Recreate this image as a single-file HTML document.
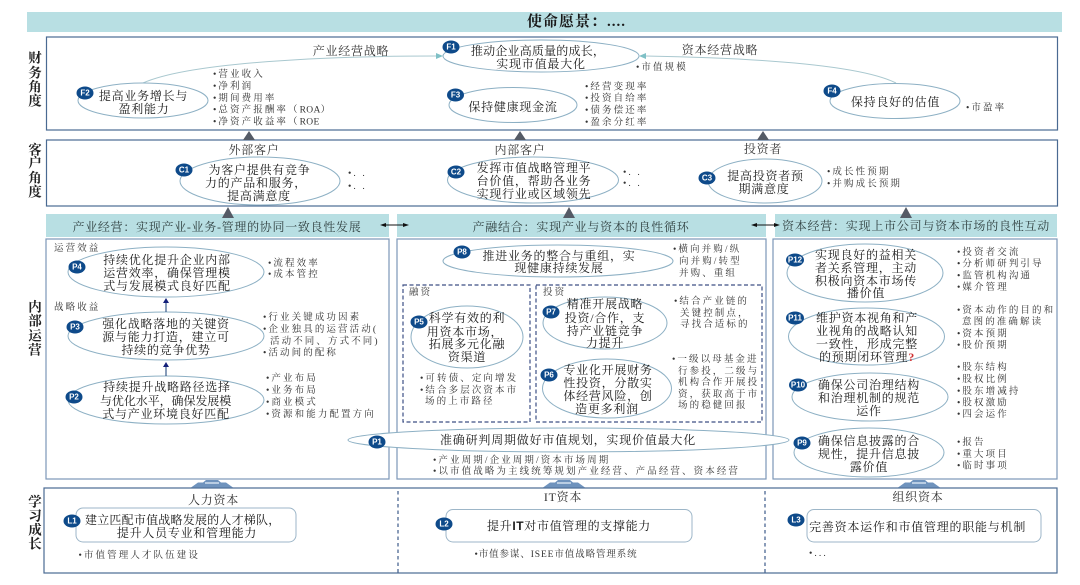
<!DOCTYPE html>
<html lang="zh"><head><meta charset="utf-8"><title>市值管理战略地图</title>
<style>
html,body{margin:0;padding:0;background:#fff;width:1080px;height:585px;overflow:hidden}
svg{display:block;filter:blur(.35px)}
text{font-family:"Liberation Serif","Noto Serif CJK SC",serif;dominant-baseline:central;fill:#1a1a1a}
.e{font-size:12px;letter-spacing:.75px;text-anchor:middle}
.h{font-size:12px;letter-spacing:.75px;text-anchor:middle;fill:#333}
.s{font-size:9.5px;letter-spacing:2.1px;fill:#333}
.v{font-size:13.5px;font-weight:700;text-anchor:middle;fill:#222}
.b{font-family:"Liberation Sans",sans-serif;font-size:8px;font-weight:700;fill:#fff;text-anchor:middle}
.box{fill:#fff;stroke:#4a6a92;stroke-width:1.2}
.pbox{fill:#fff;stroke:#7c97b8;stroke-width:1.2}
.el{fill:#fff;stroke:#8db0c4;stroke-width:1}
.rr{fill:#fff;stroke:#9db6c8;stroke-width:1}
.bd{fill:#0e4a8a}
.hd{fill:#b8dfe3}
.tri{fill:#555b66}
.up{fill:#6f93bd}
</style></head><body>
<svg width="1080" height="585" viewBox="0 0 1080 585" xmlns="http://www.w3.org/2000/svg">
<rect x="27" y="12" width="1035" height="20" class="hd"/>
<text x="527" y="22" style="font-size:15px;font-weight:700;letter-spacing:1px">使命愿景：....</text>

<rect x="46.5" y="37" width="1011" height="93" class="box"/>
<rect x="46.5" y="140" width="1011" height="66" class="box"/>
<rect x="46" y="239" width="343" height="240" class="pbox"/>
<rect x="397" y="239" width="369" height="240" class="pbox"/>
<rect x="773" y="239" width="284" height="240" class="pbox"/>
<rect x="44" y="488" width="1013" height="85" class="box"/>
<rect x="46" y="214" width="343" height="23" class="hd"/>
<rect x="397" y="214" width="369" height="23" class="hd"/>
<rect x="775" y="214" width="282" height="23" class="hd"/>

<path class="tri" d="M243 140L249 131L255 140ZM514 140L520 131L526 140ZM757 140L763 131L769 140ZM222 218L228 207L234 218ZM563 218L569 207L575 218ZM900 218L906 207L912 218Z"/>
<path class="up" d="M191 487.5L198 482.5H203L206 480H218L221 482.5H226L233 487.5ZM543 487.5L550 482.5H555L558 480H570L573 482.5H578L585 487.5ZM898 487.5L905 482.5H910L913 480H925L928 482.5H933L940 487.5Z"/>
<path d="M205 483H219M557 483H571M912 483H926" stroke="#b9cde3" stroke-width="2"/>

<g font-size="13">
<text class="v" x="35" y="58">财</text><text class="v" x="35" y="73">务</text><text class="v" x="35" y="87">角</text><text class="v" x="35" y="101">度</text>
<text class="v" x="35" y="150">客</text><text class="v" x="35" y="163">户</text><text class="v" x="35" y="178">角</text><text class="v" x="35" y="192">度</text>
<text class="v" x="35" y="307">内</text><text class="v" x="35" y="321">部</text><text class="v" x="35" y="336">运</text><text class="v" x="35" y="350">营</text>
<text class="v" x="35" y="502">学</text><text class="v" x="35" y="516">习</text><text class="v" x="35" y="530">成</text><text class="v" x="35" y="544">长</text>
</g>

<!-- curved strategy lines -->
<path d="M143 83C190 62 330 56 437 56" fill="none" stroke="#a9c8cf" stroke-width="1"/>
<path d="M896 83C860 65 760 58 645 56" fill="none" stroke="#a9c8cf" stroke-width="1"/>
<path d="M443 56L436 53V59Z" fill="#7fc0c6"/><path d="M639 56L646 53V59Z" fill="#7fc0c6"/>

<text class="h" x="351" y="51">产业经营战略</text>
<text class="h" x="720" y="50">资本经营战略</text>

<!-- ellipses -->
<ellipse class="el" cx="541" cy="56" rx="98" ry="16"/>
<ellipse class="el" cx="143" cy="100.5" rx="65" ry="17.5"/>
<ellipse class="el" cx="513" cy="105" rx="64" ry="17.5"/>
<ellipse class="el" cx="895" cy="101" rx="65" ry="17.5"/>
<ellipse class="el" cx="260" cy="181" rx="80" ry="24"/>
<ellipse class="el" cx="533" cy="180" rx="85.5" ry="23"/>
<ellipse class="el" cx="765" cy="181" rx="57" ry="22"/>
<ellipse class="el" cx="166" cy="272" rx="98" ry="25"/>
<ellipse class="el" cx="166" cy="336" rx="98" ry="24"/>
<ellipse class="el" cx="166" cy="400" rx="98" ry="24"/>
<ellipse class="el" cx="558" cy="261" rx="115" ry="16"/>
<rect x="403" y="285" width="127" height="137" fill="none" stroke="#3d4f85" stroke-width="1.2" stroke-dasharray="4 2.5"/>
<rect x="536" y="285" width="226" height="137" fill="none" stroke="#3d4f85" stroke-width="1.2" stroke-dasharray="4 2.5"/>
<ellipse class="el" cx="467" cy="337" rx="56" ry="31"/>
<ellipse class="el" cx="605" cy="323" rx="62" ry="26"/>
<ellipse class="el" cx="607" cy="388.5" rx="64.5" ry="29.5"/>
<ellipse class="el" cx="865" cy="273" rx="78" ry="29"/>
<ellipse class="el" cx="866.5" cy="336.5" rx="78" ry="28.5"/>
<ellipse class="el" cx="870" cy="397" rx="78" ry="24"/>
<ellipse class="el" cx="869" cy="452.5" rx="75" ry="24.5"/>
<ellipse class="el" cx="568.5" cy="440" rx="220.5" ry="12"/>
<rect class="rr" x="76" y="508" width="220" height="34" rx="7"/>
<rect class="rr" x="446" y="509.5" width="246" height="32.5" rx="7"/>
<rect class="rr" x="807" y="509.5" width="234" height="32.5" rx="7"/>

<path d="M398 491V574M765 491V574" stroke="#3d5a8a" stroke-width="1.2" stroke-dasharray="3.5 3" fill="none"/>

<!-- process arrows -->
<path d="M166 376V366M166 312V302" stroke="#3a5a8a" stroke-width="1.2"/>
<path d="M166 362L163 367H169ZM166 298L163 303H169Z" fill="#14207a"/>
<path d="M383 225H406M754 225H777" stroke="#111" stroke-width="1"/>
<path d="M380 225L386 223V227ZM409 225L403 223V227ZM751 225L757 223V227ZM780 225L774 223V227Z" fill="#111"/>

<!-- finance -->
<text class="e" x="538" y="51" style="letter-spacing:.2px">推动企业高质量的成长，</text>
<text class="e" x="541" y="64" style="letter-spacing:.8px">实现市值最大化</text>
<text class="e" x="143.5" y="96">提高业务增长与</text>
<text class="e" x="144" y="109">盈利能力</text>
<text class="e" x="513" y="107">保持健康现金流</text>
<text class="e" x="895.5" y="102">保持良好的估值</text>
<text class="s" x="213" y="75">•营业收入</text>
<text class="s" x="213" y="87">•净利润</text>
<text class="s" x="213" y="99">•期间费用率</text>
<text class="s" x="213" y="110.5">•总资产报酬率（<tspan style="letter-spacing:.3px">ROA</tspan>）</text>
<text class="s" x="213" y="122.5">•净资产收益率（<tspan style="letter-spacing:.3px">ROE</tspan></text>
<text class="s" x="585" y="87.5">•经营变现率</text>
<text class="s" x="585" y="99">•投资自给率</text>
<text class="s" x="585" y="111">•债务偿还率</text>
<text class="s" x="585" y="123">•盈余分红率</text>
<text class="s" x="636" y="68">•市值规模</text>
<text class="s" x="966" y="108.5">•市盈率</text>

<!-- customer -->
<text class="h" x="254" y="150">外部客户</text>
<text class="h" x="520" y="150">内部客户</text>
<text class="h" x="763" y="149">投资者</text>
<text class="e" x="259.5" y="170">为客户提供有竞争</text>
<text class="e" x="256" y="183">力的产品和服务，</text>
<text class="e" x="259" y="196">提高满意度</text>
<text class="e" x="534" y="168">发挥市值战略管理平</text>
<text class="e" x="534" y="181">台价值，帮助各业务</text>
<text class="e" x="534" y="194">实现行业或区域领先</text>
<text class="e" x="765.5" y="176">提高投资者预</text>
<text class="e" x="764" y="189">期满意度</text>
<text class="s" x="348" y="174">•. .</text><text class="s" x="348" y="187">•. .</text>
<text class="s" x="623" y="173">•. .</text><text class="s" x="623" y="184">•. .</text>
<text class="s" x="827" y="172.7">•成长性预期</text>
<text class="s" x="827" y="184.5">•并购成长预期</text>

<!-- headers -->
<text class="h" x="217" y="227" textLength="289" lengthAdjust="spacing" style="fill:#2f3f3f">产业经营：实现产业-业务-管理的协同一致良性发展</text>
<text class="h" x="581" y="227" textLength="217" lengthAdjust="spacing" style="fill:#2f3f3f">产融结合：实现产业与资本的良性循环</text>
<text class="h" x="916" y="226" textLength="268" lengthAdjust="spacing" style="fill:#2f3f3f">资本经营：实现上市公司与资本市场的良性互动</text>

<!-- left process -->
<text class="s" x="54" y="249">运营效益</text>
<text class="s" x="54" y="308">战略收益</text>
<text class="e" x="167" y="260">持续优化提升企业内部</text>
<text class="e" x="167" y="273">运营效率，确保管理模</text>
<text class="e" x="167" y="286">式与发展模式良好匹配</text>
<text class="e" x="166" y="324">强化战略落地的关键资</text>
<text class="e" x="166" y="337">源与能力打造，建立可</text>
<text class="e" x="166" y="350">持续的竞争优势</text>
<text class="e" x="167" y="387">持续提升战略路径选择</text>
<text class="e" x="166" y="401" textLength="132" lengthAdjust="spacing">与优化水平，确保发展模</text>
<text class="e" x="166" y="414">式与产业环境良好匹配</text>
<text class="s" x="268" y="264">•流程效率</text>
<text class="s" x="268" y="275">•成本管控</text>
<text class="s" x="263" y="318">•行业关键成功因素</text>
<text class="s" x="263" y="330">•企业独具的运营活动(</text>
<text class="s" x="270" y="342">活动不同、方式不同)</text>
<text class="s" x="263" y="353.5">•活动间的配称</text>
<text class="s" x="266" y="379">•产业布局</text>
<text class="s" x="266" y="391">•业务布局</text>
<text class="s" x="266" y="403">•商业模式</text>
<text class="s" x="266" y="415">•资源和能力配置方向</text>

<!-- middle process -->
<text class="e" x="559" y="256">推进业务的整合与重组，实</text>
<text class="e" x="559" y="268">现健康持续发展</text>
<text class="s" x="673" y="250">•横向并购/纵</text>
<text class="s" x="679" y="262">向并购/转型</text>
<text class="s" x="679" y="274">并购、重组</text>
<text class="s" x="409" y="293">融资</text>
<text class="s" x="543" y="293">投资</text>
<text class="e" x="467" y="318">科学有效的利</text>
<text class="e" x="465" y="332">用资本市场，</text>
<text class="e" x="467" y="344">拓展多元化融</text>
<text class="e" x="467" y="357">资渠道</text>
<text class="s" x="420" y="379">•可转债、定向增发</text>
<text class="s" x="420" y="391">•结合多层次资本市</text>
<text class="s" x="425" y="402">场的上市路径</text>
<text class="e" x="605" y="304">精准开展战略</text>
<text class="e" x="605" y="318">投资/合作，支</text>
<text class="e" x="605" y="331">持产业链竞争</text>
<text class="e" x="605" y="343">力提升</text>
<text class="e" x="608" y="370">专业化开展财务</text>
<text class="e" x="608" y="383">性投资，分散实</text>
<text class="e" x="608" y="396">体经营风险，创</text>
<text class="e" x="607" y="409">造更多利润</text>
<text class="s" x="674" y="302">•结合产业链的</text>
<text class="s" x="680" y="314">关键控制点，</text>
<text class="s" x="680" y="325">寻找合适标的</text>
<text class="s" x="672" y="360">•一级以母基金进</text>
<text class="s" x="678" y="372">行参投，二级与</text>
<text class="s" x="678" y="383">机构合作开展投</text>
<text class="s" x="678" y="395">资，获取高于市</text>
<text class="s" x="678" y="406">场的稳健回报</text>
<text class="e" x="568" y="440" textLength="256" lengthAdjust="spacing">准确研判周期做好市值规划，实现价值最大化</text>
<text class="s" x="433" y="461">•产业周期/企业周期/资本市场周期</text>
<text class="s" x="433" y="472">•以市值战略为主线统筹规划产业经营、产品经营、资本经营</text>

<!-- right process -->
<text class="e" x="866" y="255">实现良好的益相关</text>
<text class="e" x="866" y="268">者关系管理，主动</text>
<text class="e" x="866" y="281">积极向资本市场传</text>
<text class="e" x="866" y="293">播价值</text>
<text class="s" x="957" y="253">•投资者交流</text>
<text class="s" x="957" y="264.5">•分析师研判引导</text>
<text class="s" x="957" y="276.5">•监管机构沟通</text>
<text class="s" x="957" y="288">•媒介管理</text>
<text class="e" x="867" y="318">维护资本视角和产</text>
<text class="e" x="867" y="331">业视角的战略认知</text>
<text class="e" x="867" y="344">一致性，形成完整</text>
<text class="e" x="867" y="357">的预期闭环管理<tspan style="fill:#d03030;font-weight:700">?</tspan></text>
<text class="s" x="957" y="311">•资本动作的目的和</text>
<text class="s" x="962" y="322.5">意图的准确解读</text>
<text class="s" x="957" y="334.5">•资本预期</text>
<text class="s" x="957" y="346">•股价预期</text>
<text class="e" x="869" y="385">确保公司治理结构</text>
<text class="e" x="869" y="398">和治理机制的规范</text>
<text class="e" x="869" y="411">运作</text>
<text class="s" x="957" y="368">•股东结构</text>
<text class="s" x="957" y="380">•股权比例</text>
<text class="s" x="957" y="392">•股东增减持</text>
<text class="s" x="957" y="403.5">•股权激励</text>
<text class="s" x="957" y="415">•四会运作</text>
<text class="e" x="869" y="441">确保信息披露的合</text>
<text class="e" x="869" y="454">规性，提升信息披</text>
<text class="e" x="869" y="467">露价值</text>
<text class="s" x="957" y="443">•报告</text>
<text class="s" x="957" y="455">•重大项目</text>
<text class="s" x="957" y="466.5">•临时事项</text>

<!-- learning -->
<text class="h" x="213.5" y="500">人力资本</text>
<text class="h" x="563" y="497">IT资本</text>
<text class="h" x="918" y="497">组织资本</text>
<text class="e" x="183" y="520" textLength="196" lengthAdjust="spacing">建立匹配市值战略发展的人才梯队，</text>
<text class="e" x="187" y="533">提升人员专业和管理能力</text>
<text class="e" x="569" y="526" textLength="164" lengthAdjust="spacing">提升<tspan font-family="Liberation Sans" font-weight="700">IT</tspan>对市值管理的支撑能力</text>
<text class="e" x="917.6" y="527" textLength="217" lengthAdjust="spacing">完善资本运作和市值管理的职能与机制</text>
<text class="s" x="78.5" y="556">•市值管理人才队伍建设</text>
<text class="s" x="474.5" y="555" style="letter-spacing:.9px">•市值参谋、ISEE市值战略管理系统</text>
<text class="s" x="809" y="554">•...</text>

<!-- badges -->
<g>
<ellipse class="bd" cx="451" cy="47" rx="8.5" ry="6.5"/><text class="b" x="451" y="47">F1</text>
<ellipse class="bd" cx="85" cy="93" rx="8.5" ry="6.5"/><text class="b" x="85" y="93">F2</text>
<ellipse class="bd" cx="455.5" cy="95" rx="8.5" ry="6.5"/><text class="b" x="455.5" y="95">F3</text>
<ellipse class="bd" cx="832" cy="91" rx="8.5" ry="6.5"/><text class="b" x="832" y="91">F4</text>
<ellipse class="bd" cx="184" cy="170" rx="8.5" ry="6.5"/><text class="b" x="184" y="170">C1</text>
<ellipse class="bd" cx="456" cy="172" rx="8.5" ry="6.5"/><text class="b" x="456" y="172">C2</text>
<ellipse class="bd" cx="707" cy="178" rx="8.5" ry="6.5"/><text class="b" x="707" y="178">C3</text>
<ellipse class="bd" cx="77" cy="267" rx="8.5" ry="6.5"/><text class="b" x="77" y="267">P4</text>
<ellipse class="bd" cx="75" cy="327" rx="8.5" ry="6.5"/><text class="b" x="75" y="327">P3</text>
<ellipse class="bd" cx="74" cy="397" rx="8.5" ry="6.5"/><text class="b" x="74" y="397">P2</text>
<ellipse class="bd" cx="377" cy="442" rx="8.5" ry="6.5"/><text class="b" x="377" y="442">P1</text>
<ellipse class="bd" cx="462" cy="252" rx="8.5" ry="6.5"/><text class="b" x="462" y="252">P8</text>
<ellipse class="bd" cx="419" cy="322" rx="8.5" ry="6.5"/><text class="b" x="419" y="322">P5</text>
<ellipse class="bd" cx="551" cy="312" rx="8.5" ry="6.5"/><text class="b" x="551" y="312">P7</text>
<ellipse class="bd" cx="549" cy="375" rx="8.5" ry="6.5"/><text class="b" x="549" y="375">P6</text>
<ellipse class="bd" cx="795" cy="260" rx="9" ry="6.5"/><text class="b" x="795" y="260">P12</text>
<ellipse class="bd" cx="795" cy="318" rx="9" ry="6.5"/><text class="b" x="795" y="318">P11</text>
<ellipse class="bd" cx="798" cy="385" rx="9" ry="6.5"/><text class="b" x="798" y="385">P10</text>
<ellipse class="bd" cx="802" cy="443" rx="8.5" ry="6.5"/><text class="b" x="802" y="443">P9</text>
<ellipse class="bd" cx="72" cy="521" rx="8.5" ry="6.5"/><text class="b" x="72" y="521">L1</text>
<ellipse class="bd" cx="444" cy="524" rx="8.5" ry="6.5"/><text class="b" x="444" y="524">L2</text>
<ellipse class="bd" cx="796" cy="520" rx="8.5" ry="6.5"/><text class="b" x="796" y="520">L3</text>
</g>
</svg>
</body></html>
